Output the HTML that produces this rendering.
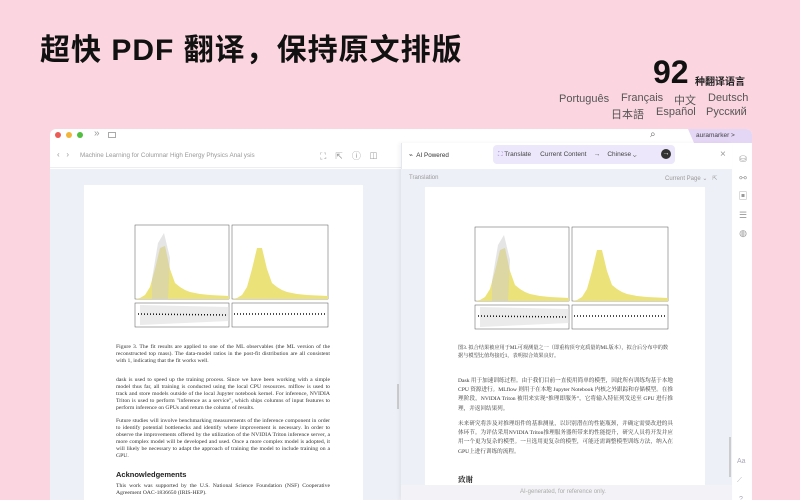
<!DOCTYPE html>
<html><head><meta charset="utf-8"><style>
*{margin:0;padding:0;box-sizing:border-box}
body{width:800px;height:500px;overflow:hidden;background:#fbd6e1;font-family:"Liberation Sans","Noto Sans CJK SC",sans-serif;position:relative}
.a{position:absolute}
.t{font-size:30px;font-weight:bold;color:#111;left:40px;top:25px;letter-spacing:1px}
.lang{font-size:11px;color:#555}
.ser{font-family:"Liberation Serif","Noto Serif CJK SC",serif;color:#333}
.p{font-size:5.7px;line-height:7.1px;text-align:justify}
.ic{color:#999;font-size:10px}
.cn{font-size:5.6px;line-height:9.2px;text-align:justify}
</style></head><body>
<div class="a t">超快 PDF 翻译，保持原文排版</div>
<div class="a" style="left:653px;top:54px;font-size:32px;font-weight:bold;color:#111">92</div>
<div class="a" style="left:695px;top:73px;font-size:10px;font-weight:bold;color:#222">种翻译语言</div>
<div class="a lang" style="left:559px;top:93px">Português</div>
<div class="a lang" style="left:621px;top:92px">Français</div>
<div class="a lang" style="left:674px;top:92px">中文</div>
<div class="a lang" style="left:708px;top:92px">Deutsch</div>
<div class="a lang" style="left:611px;top:106px">日本語</div>
<div class="a lang" style="left:656px;top:106px">Español</div>
<div class="a lang" style="left:706px;top:106px">Русский</div>

<div class="a" style="left:50px;top:129px;width:702px;height:371px;background:#fff;border-radius:6px 6px 0 0;overflow:hidden">
 <div class="a" style="left:5px;top:3px;width:6px;height:6px;border-radius:50%;background:#ec5b56"></div>
 <div class="a" style="left:16px;top:3px;width:6px;height:6px;border-radius:50%;background:#f2b53a"></div>
 <div class="a" style="left:27px;top:3px;width:6px;height:6px;border-radius:50%;background:#50be3f"></div>
 <div class="a ic" style="left:44px;top:-1px">»</div>
 <div class="a" style="left:58px;top:3px;width:8px;height:6px;border:1px solid #aaa"></div>
 <div class="a ic" style="left:600px;top:0px;color:#666">⌕</div>
 <div class="a" style="left:630px;top:0;width:72px;height:14px;background:#e4d6f5;clip-path:polygon(8px 0,100% 0,100% 100%,14px 100%)"></div>
 <div class="a" style="left:646px;top:3px;font-size:6.5px;color:#444">auramarker &gt;</div>
 <div class="a" style="left:0;top:14px;width:351px;height:25px;border-bottom:1px solid #eee"></div>
 <div class="a ic" style="left:7px;top:21px;font-size:8px">‹ &nbsp; ›</div>
 <div class="a" style="left:30px;top:23px;font-size:6.3px;color:#999">Machine Learning for Columnar High Energy Physics Anal ysis</div>
 <div class="a ic" style="left:270px;top:20px;font-size:9px;letter-spacing:9px">⛶⇱ⓘ◫</div>
 <div class="a" style="left:0;top:40px;width:351px;height:331px;background:#eef0f8"></div>
 <div class="a" style="left:34px;top:56px;width:279px;height:320px;background:#fff">
  <svg class="a" style="left:26px;top:38px" width="220" height="110" viewBox="0 0 220 110">
   <rect x="25" y="2" width="94" height="74" fill="#fff" stroke="#555" stroke-width=".5"/>
   <rect x="122" y="2" width="96" height="74" fill="#fff" stroke="#555" stroke-width=".5"/>
   <path d="M25 76 L30 75 35 72 40 64 45 46 50 25 55 23 60 46 65 60 70 64 75 67 80 69 90 71 100 72 119 73 V76Z" fill="#ece27a"/>
   <path d="M42 56 L48 20 54 10 60 35 L58 76 H42Z" fill="#ccc" opacity=".5"/>
   <path d="M122 76 L127 75 132 72 137 64 142 46 147 25 152 25 157 46 162 60 167 64 172 67 177 69 187 71 197 72 218 73 V76Z" fill="#ece27a"/>
   <rect x="25" y="80" width="94" height="24" fill="#fff" stroke="#555" stroke-width=".5"/>
   <rect x="122" y="80" width="96" height="24" fill="#fff" stroke="#555" stroke-width=".5"/>
   <path d="M30 82 L119 84 119 98 L30 102Z" fill="#ddd" opacity=".6"/>
   <line x1="28" y1="91" x2="117" y2="92" stroke="#111" stroke-dasharray="1 2" stroke-width="1.5"/>
   <line x1="124" y1="91" x2="216" y2="91" stroke="#111" stroke-dasharray="1 2" stroke-width="1.5"/>
  </svg>
  <div class="a ser p" style="left:32px;top:159px;width:214px">Figure 3. The fit results are applied to one of the ML observables (the ML version of the reconstructed top mass). The data-model ratios in the post-fit distribution are all consistent with 1, indicating that the fit works well.</div>
  <div class="a ser p" style="left:32px;top:192px;width:214px">dask is used to speed up the training process. Since we have been working with a simple model thus far, all training is conducted using the local CPU resources. mlflow is used to track and store models outside of the local Jupyter notebook kernel. For inference, NVIDIA Triton is used to perform "inference as a service", which ships columns of input features to perform inference on GPUs and return the column of results.</div>
  <div class="a ser p" style="left:32px;top:233px;width:214px">Future studies will involve benchmarking measurements of the inference component in order to identify potential bottlenecks and identify where improvement is necessary. In order to observe the improvements offered by the utilization of the NVIDIA Triton inference server, a more complex model will be developed and used. Once a more complex model is adopted, it will likely be necessary to adapt the approach of training the model to include training on a GPU.</div>
  <div class="a" style="left:32px;top:285px;font-size:7.5px;font-weight:bold;color:#222">Acknowledgements</div>
  <div class="a ser p" style="left:32px;top:298px;width:214px">This work was supported by the U.S. National Science Foundation (NSF) Cooperative Agreement OAC-1836650 (IRIS-HEP).</div>
 </div>
 <div class="a" style="left:347px;top:255px;width:2px;height:25px;background:#ccc"></div>
 <div class="a" style="left:351px;top:14px;width:331px;height:357px;background:#fff;border-left:1px solid #e6e6ee;box-shadow:-2px 0 4px rgba(0,0,0,.05)"></div>
 <div class="a" style="left:359px;top:23px;font-size:6.3px;color:#333">⌁ &nbsp;AI Powered</div>
 <div class="a" style="left:443px;top:16px;width:182px;height:19px;background:#ece7fa;border-radius:4px"></div>
 <div class="a" style="left:448px;top:22px;font-size:6.5px;color:#444"><span style="color:#8a6fd6">⛶</span> Translate &nbsp;&nbsp;&nbsp; Current Content &nbsp;&nbsp; → &nbsp;&nbsp; Chinese ⌄</div>
 <div class="a" style="left:611px;top:20px;width:10px;height:10px;border-radius:50%;background:#333;color:#fff;font-size:7px;text-align:center;line-height:10px">→</div>
 <div class="a ic" style="left:670px;top:20px">×</div>
 <div class="a" style="left:351px;top:40px;width:331px;height:331px;background:#eef0f8"></div>
 <div class="a" style="left:359px;top:46px;font-size:6px;color:#999">Translation</div>
 <div class="a" style="left:615px;top:46px;font-size:6px;color:#999">Current Page ⌄ &nbsp; ⇱</div>
 <div class="a" style="left:375px;top:58px;width:280px;height:300px;background:#fff">
  <svg class="a" style="left:25px;top:38px" width="220" height="110" viewBox="0 0 220 110">
   <rect x="25" y="2" width="94" height="74" fill="#fff" stroke="#555" stroke-width=".5"/>
   <rect x="122" y="2" width="96" height="74" fill="#fff" stroke="#555" stroke-width=".5"/>
   <path d="M25 76 L30 75 35 72 40 64 45 46 50 25 55 23 60 46 65 60 70 64 75 67 80 69 90 71 100 72 119 73 V76Z" fill="#ece27a"/>
   <path d="M42 56 L48 20 54 10 60 35 L58 76 H42Z" fill="#ccc" opacity=".5"/>
   <path d="M122 76 L127 75 132 72 137 64 142 46 147 25 152 25 157 46 162 60 167 64 172 67 177 69 187 71 197 72 218 73 V76Z" fill="#ece27a"/>
   <rect x="25" y="80" width="94" height="24" fill="#fff" stroke="#555" stroke-width=".5"/>
   <rect x="122" y="80" width="96" height="24" fill="#fff" stroke="#555" stroke-width=".5"/>
   <path d="M30 82 L119 84 119 98 L30 102Z" fill="#ddd" opacity=".6"/>
   <line x1="28" y1="91" x2="117" y2="92" stroke="#111" stroke-dasharray="1 2" stroke-width="1.5"/>
   <line x1="124" y1="91" x2="216" y2="91" stroke="#111" stroke-dasharray="1 2" stroke-width="1.5"/>
  </svg>
  <div class="a ser" style="left:33px;top:157px;width:215px;font-size:5.2px;line-height:8px">图3. 拟合结果被应用于ML可观测量之一（即重构顶夸克质量的ML版本），拟合后分布中的数据与模型比值均接近1，表明拟合效果良好。</div>
  <div class="a ser cn" style="left:33px;top:190px;width:215px">Dask 用于加速训练过程。由于我们目前一直使用简单的模型，因此所有训练均基于本地 CPU 资源进行。MLflow 则用于在本地 Jupyter Notebook 内核之外跟踪和存储模型。在推理阶段，NVIDIA Triton 被用来实现“推理即服务”，它将输入特征列发送至 GPU 进行推理，并返回结果列。</div>
  <div class="a ser cn" style="left:33px;top:233px;width:215px">未来研究将涉及对推理组件的基准测量，以识别潜在的性能瓶颈，并确定需要改进的具体环节。为评估采用NVIDIA Triton推理服务器所带来的性能提升，研究人员将开发并应用一个更为复杂的模型。一旦选用更复杂的模型，可能还需调整模型训练方法，纳入在GPU上进行训练的流程。</div>
  <div class="a ser" style="left:33px;top:287px;font-size:7.5px;font-weight:bold;color:#222">致谢</div>
 </div>
 <div class="a" style="left:351px;top:356px;width:331px;height:15px;background:#f3f3f7"></div>
 <div class="a" style="left:470px;top:360px;font-size:6px;color:#aaa">AI-generated, for reference only.</div>
 <div class="a" style="left:679px;top:308px;width:2px;height:40px;background:#ccc"></div>
 <div class="a ic" style="left:687px;top:21px;line-height:18.5px;text-align:center;width:12px;font-size:9px">⛁<br>⚯<br>▣<br>☰<br>◍</div>
 <div class="a ic" style="left:687px;top:323px;line-height:19px;font-size:7px;color:#aab">Aa<br>⟋<br>&nbsp;?</div>
</div>
</body></html>
